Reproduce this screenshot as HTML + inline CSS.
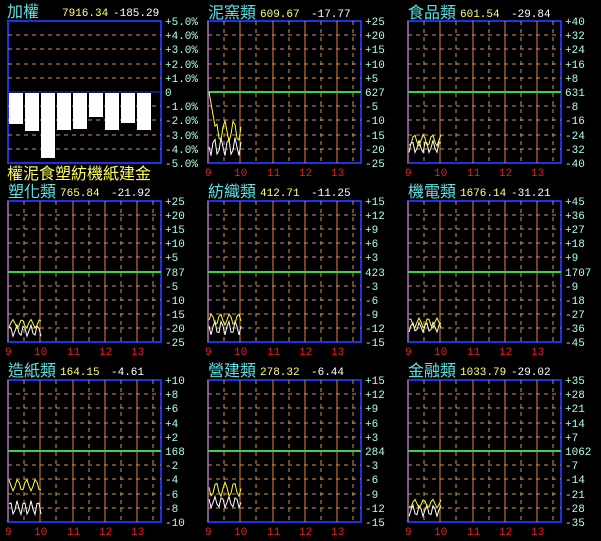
<!DOCTYPE html>
<html><head><meta charset="utf-8"><style>
html,body{margin:0;padding:0;background:#000;width:601px;height:541px;overflow:hidden}
svg{display:block}
</style></head><body>
<svg id="s" width="601" height="541" xmlns="http://www.w3.org/2000/svg" font-family="Liberation Mono, monospace">
</svg>
<script>
const s=document.getElementById('s');let h='';
const T=(x,y,t,c,sz,f)=>{h+=`<text x="${x}" y="${y}" fill="${c}" font-size="${sz}" ${f?'font-family="Liberation Sans, Noto Sans CJK TC, sans-serif"':''}>${t}</text>`};
const L=(x1,y1,x2,y2,c,w,d)=>{h+=`<line x1="${x1}" y1="${y1}" x2="${x2}" y2="${y2}" stroke="${c}" stroke-width="${w||1}" ${d?'stroke-dasharray="4,4"':''}/>`};
const cols=[8,208,408],rows=[[21,163],[201,342],[380,522]];
const lbl='#b0ffe8';
function grid(x,y0,y1){
  const hgt=y1-y0;
  for(let i=1;i<10;i++){const y=Math.round(y0+hgt*i/10);if(i!=5)L(x,y,x+153,y,'#d09060',1,true);}
  for(let k=0;k<5;k++){const vx=Math.round(x+k*32.3);L(vx,y0,vx,y1,'#e08040',1);const hx=Math.round(x+16+k*32.3);if(hx<x+153)L(hx,y0,hx,y1,'#d09060',1,true);}
  const my=Math.round(y0+hgt/2);L(x,my,x+153,my,'#40d040',2);
}
function ticks(x,y0,y1,labs){labs.forEach((t,i)=>T(x+157,Math.round(y0+(y1-y0)*i/10)+4,t,lbl,11));}
{const x=8,[y0,y1]=rows[0];
 h+=`<rect x="${x}" y="${y0}" width="153" height="${y1-y0}" fill="#000" stroke="#2030e0" stroke-width="2"/>`;
 for(let i=1;i<10;i++){if(i!=5)L(x,Math.round(y0+14.2*i),x+153,Math.round(y0+14.2*i),'#d09060',1,true);}
 L(x,92,x+153,92,'#2030e0',1);
 const b=[124,131,158,130,129,117,130,123,130];
 b.forEach((v,i)=>h+=`<rect x="${9+i*16}" y="93" width="14" height="${v-93}" fill="#fff"/>`);
 const l=['+5.0%','+4.0%','+3.0%','+2.0%','+1.0%','0','-1.0%','-2.0%','-3.0%','-4.0%','-5.0%'];
 l.forEach((t,i)=>T(165,Math.round(y0+14.2*i)+4,t,lbl,11));
 T(7,17,'加權','#60e0e0',16,1);T(62,16,'7916.34','#ffff80',11);T(113,16,'-185.29','#fff',11);
 T(7,179,'權泥食塑紡機紙建金','#ffff60',16,1);
}
const P=[
 [1,0,'泥窯類','609.67','-17.77',5,'627'],
 [2,0,'食品類','601.54','-29.84',8,'631'],
 [0,1,'塑化類','765.84','-21.92',5,'787'],
 [1,1,'紡織類','412.71','-11.25',3,'423'],
 [2,1,'機電類','1676.14','-31.21',9,'1707'],
 [0,2,'造紙類','164.15','-4.61',2,'168'],
 [1,2,'營建類','278.32','-6.44',3,'284'],
 [2,2,'金融類','1033.79','-29.02',7,'1062']];
const yl=[[0.7,0.85,0.82,0.95],[0.8,0.88,0.84,0.93],[0.84,0.9,0.88,0.96],[0.8,0.88,0.85,0.95],[0.83,0.9,0.86,0.93],[0.7,0.78,0.85,0.95],[0.72,0.82,0.82,0.9],[0.84,0.9,0.88,0.96]];
P.forEach((p,k)=>{
 const x=cols[p[0]],[y0,y1]=rows[p[1]],hg=y1-y0;
 h+=`<rect x="${x}" y="${y0}" width="153" height="${hg}" fill="#000" stroke="#2030e0" stroke-width="2"/>`;
 grid(x,y0,y1);
 const st=p[5],labs=[];for(let i=5;i>0;i--)labs.push('+'+st*i);labs.push(p[6]);for(let i=1;i<=5;i++)labs.push('-'+st*i);
 ticks(x,y0,y1,labs);
 ['9','10','11','12','13'].forEach((t,i)=>T(Math.round(x+i*32.3)-(i?6:3),y1+13,t,'#e02020',11));
 const ty0=[18,197,376][p[1]];
 T(x,ty0,p[2],'#60e0e0',16,1);T(x+52,ty0-1,p[3],'#ffff80',11);T(x+103,ty0-1,p[4],'#fff',11);
 const r=yl[k];let py='',pw='';
 for(let i=0;i<=32;i+=2){const px=x+1+i;
  let a=r[0]+(r[1]-r[0])*(0.5+0.5*Math.sin(i*0.7+k));
  if(k==0&&i<8)a=0.5+i*0.04;
  const b=r[2]+(r[3]-r[2])*(0.5+0.5*Math.sin(i*0.9+k*2));
  py+=(i?'L':'M')+px+' '+(y0+hg*a).toFixed(1);pw+=(i?'L':'M')+px+' '+(y0+hg*b).toFixed(1);}
 h+=`<path d="${pw}" stroke="#fff" fill="none"/><path d="${py}" stroke="#ffff40" fill="none"/>`;
});
s.innerHTML=h;
</script>
</body></html>
